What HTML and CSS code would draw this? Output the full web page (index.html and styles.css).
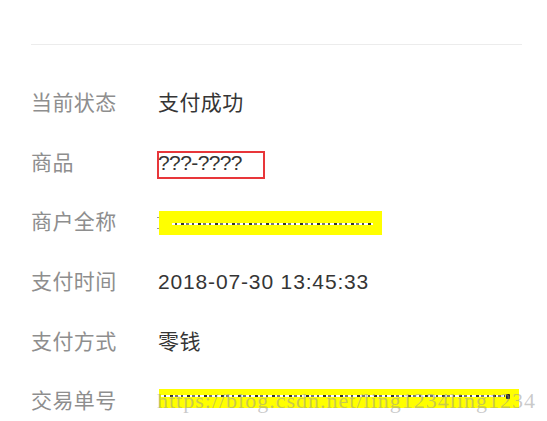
FILE: index.html
```html
<!DOCTYPE html>
<html>
<head>
<meta charset="utf-8">
<link rel="stylesheet" href="styles.css">
</head>
<body>
<div class="page">
  <div class="divider"></div>
  <div class="list">
    <div class="row"><span class="label">当前状态</span><span class="value">支付成功</span></div>
    <div class="row"><span class="label">商品</span><span class="value goods">???-????</span><span class="redbox"></span></div>
    <div class="row"><span class="label">商户全称</span><span class="value"></span><span class="mark m1"></span><span class="mark m2"></span><span class="yellow y1"><span class="strike s1"></span></span></div>
    <div class="row"><span class="label">支付时间</span><span class="value date">2018-07-30 13:45:33</span></div>
    <div class="row"><span class="label">支付方式</span><span class="value">零钱</span></div>
    <div class="row"><span class="label">交易单号</span><span class="value"></span><span class="yellow y2"><span class="strike s2"></span><span class="blob"></span></span><span class="watermark">https://blog.csdn.net/ling1234ling1234</span></div>
  </div>
</div>
</body>
</html>
```
FILE: styles.css
```css
html, body {
  margin: 0;
  padding: 0;
  background: #ffffff;
}
.page {
  width: 547px;
  height: 421px;
  overflow: hidden;
  font-family: "Liberation Sans", "Noto Sans CJK SC", sans-serif;
}
.divider {
  margin: 44px 0 0 31px;
  width: 491px;
  height: 1px;
  background: #ececec;
}
.list {
  padding-top: 28px;
  padding-left: 31px;
}
.row {
  position: relative;
  height: 59.6px;
  display: flex;
  align-items: center;
  font-size: 21px;
  line-height: 1;
}
.label {
  width: 127px;
  color: #8e8e8e;
  letter-spacing: 0.4px;
}
.value {
  color: #353535;
  letter-spacing: 0.4px;
}
.goods {
  letter-spacing: -0.6px;
}
.date {
  letter-spacing: 0.85px;
}
.redbox {
  position: absolute;
  left: 126px;
  top: 18px;
  width: 104px;
  height: 24px;
  border: 2px solid #e8363a;
}
.mark {
  position: absolute;
  left: 126px;
  width: 2px;
  height: 1px;
  background: #9a9a9a;
}
.m1 { top: 25px; }
.m2 { top: 36px; }
.yellow {
  position: absolute;
  background: #ffff00;
}
.y1 {
  left: 128px;
  top: 19px;
  width: 223px;
  height: 24px;
}
.strike {
  position: absolute;
  height: 2px;
  background: repeating-linear-gradient(90deg, #ffffff 0 3px, #555555 3px 5px, #ffffff 5px 9px, #333333 9px 12px, #ffffff 12px 14px, #777777 14px 17px);
}
.s1 {
  left: 13px;
  right: 9px;
  top: 12px;
}
.y2 {
  left: 128px;
  top: 18px;
  width: 360px;
  height: 19px;
}
.s2 {
  left: 2px;
  right: 14px;
  top: 6px;
}
.blob {
  position: absolute;
  right: 9px;
  top: 5px;
  width: 4px;
  height: 5px;
  background: #222222;
  border-radius: 1px;
}
.watermark {
  position: absolute;
  left: 126px;
  top: 18.6px;
  font-family: "Liberation Serif", serif;
  font-size: 22px;
  color: rgba(150, 150, 150, 0.5);
  white-space: nowrap;
  letter-spacing: 1px;
}
```
